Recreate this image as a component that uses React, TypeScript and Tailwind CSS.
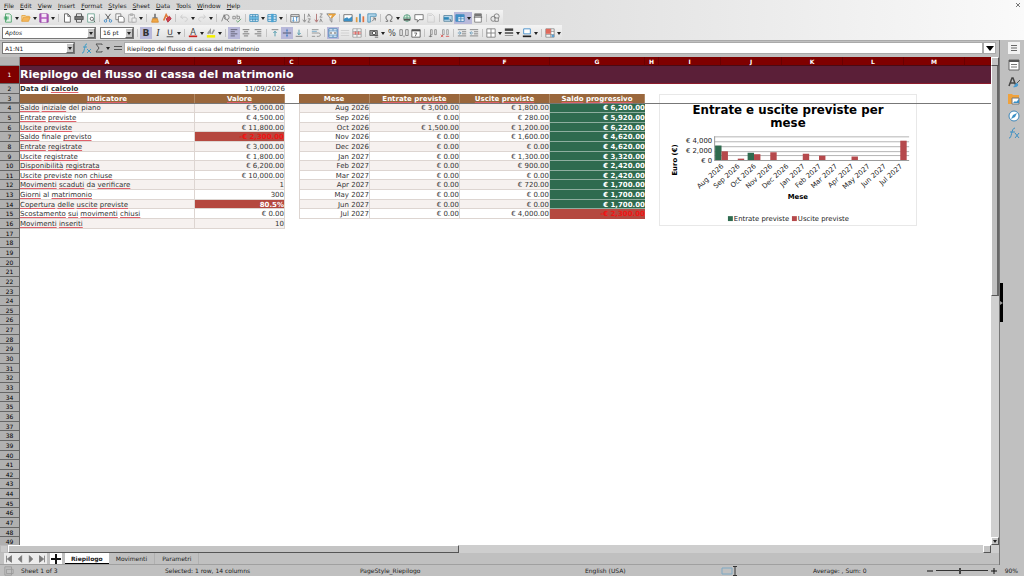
import { useState } from "react"
import type { ReactNode } from "react"

const COLS = "grid grid-rows-[minmax(0,1fr)] grid-cols-[20px_175px_90px_14px_71px_90px_90px_95px_14px_62px_61px_61px_61px_61px_minmax(0,1fr)]"

const menus = ["File", "Edit", "View", "Insert", "Format", "Styles", "Sheet", "Data", "Tools", "Window", "Help"]
const letters = ["A", "B", "C", "D", "E", "F", "G", "H", "I", "J", "K", "L", "M", ""]

// words the Italian labels share with the spell checker dictionary
const knownWords = ["del", "di", "Data", "piano", "finale", "non", "al", "da", "Mese"]

const indicators = [
    ["Saldo iniziale del piano", "€ 5,000.00"],
    ["Entrate previste", "€ 4,500.00"],
    ["Uscite previste", "€ 11,800.00"],
    ["Saldo finale previsto", "-€ 2,300.00"],
    ["Entrate registrate", "€ 3,000.00"],
    ["Uscite registrate", "€ 1,800.00"],
    ["Disponibilità registrata", "€ 6,200.00"],
    ["Uscite previste non chiuse", "€ 10,000.00"],
    ["Movimenti scaduti da verificare", "1"],
    ["Giorni al matrimonio", "300"],
    ["Copertura delle uscite previste", "80.5%"],
    ["Scostamento sui movimenti chiusi", "€ 0.00"],
    ["Movimenti inseriti", "10"],
]

const months = [
    { name: "Aug 2026", income: 3000, expense: 1800, balance: 6200 },
    { name: "Sep 2026", income: 0, expense: 280, balance: 5920 },
    { name: "Oct 2026", income: 1500, expense: 1200, balance: 6220 },
    { name: "Nov 2026", income: 0, expense: 1600, balance: 4620 },
    { name: "Dec 2026", income: 0, expense: 0, balance: 4620 },
    { name: "Jan 2027", income: 0, expense: 1300, balance: 3320 },
    { name: "Feb 2027", income: 0, expense: 900, balance: 2420 },
    { name: "Mar 2027", income: 0, expense: 0, balance: 2420 },
    { name: "Apr 2027", income: 0, expense: 720, balance: 1700 },
    { name: "May 2027", income: 0, expense: 0, balance: 1700 },
    { name: "Jun 2027", income: 0, expense: 0, balance: 1700 },
    { name: "Jul 2027", income: 0, expense: 4000, balance: -2300 },
]

function euro(n: number) {
    return `${n < 0 ? "-" : ""}€ ${Math.abs(n).toLocaleString("en-US", { minimumFractionDigits: 2 })}`
}

const icons: Record<string, ReactNode> = {
    new: <><path d="M3 1h5l2 2v8H3z" fill="#e8f5ec" stroke="#4a9f68" /><path d="M1 5h6M1 7h6M4 4v5" stroke="#2f9c5a" /></>,
    open: <><path d="M1 10V3h4l1 1h4v2" fill="#f7d9a0" stroke="#e5a13c" /><path d="M1 10l2-5h8l-2 5z" fill="#f5b75c" stroke="#e5a13c" /></>,
    save: <><path d="M1 1h9l1 1v9H1z" fill="#b45ac0" stroke="#8e3f9c" /><path d="M3 1h6v4H3zM3 7h6v4H3z" fill="#f3e6f5" stroke="none" /></>,
    pdf: <path d="M3 1h4l3 3v7H3zM7 1v3h3" fill="#fff" stroke="#555" />,
    print: <><path d="M3 4V1h6v3M3 8v3h6V8" fill="#fff" stroke="#444" /><path d="M1 4h10v4H1z" fill="#777" stroke="#444" /></>,
    preview: <><path d="M2 1h8v10H2z" fill="#fff" stroke="#69a08e" /><circle cx="7" cy="7" r="2" stroke="#555" /><path d="M9 9l2 2" stroke="#555" /></>,
    cut: <><path d="M3 1l5 7M9 1L4 8" stroke="#444" /><circle cx="3" cy="9.500" r="1.500" stroke="#3585c6" /><circle cx="9" cy="9.500" r="1.500" stroke="#3585c6" /></>,
    copy: <><path d="M1 1h6v7H1z" fill="#fff" stroke="#777" /><path d="M4 4h5l2 2v5H4z" fill="#fff" stroke="#666" /></>,
    paste: <><path d="M2 2h7v9H2zM4 1h3v2H4z" stroke="#aaa" /><path d="M6 6h5v5H6z" fill="#eee" stroke="#aaa" /></>,
    brush: <><path d="M6 1v4M3 6h6" stroke="#777" strokeWidth="2" /><path d="M3 7h6l1 4H2z" fill="#f0a848" stroke="#d88a2a" /></>,
    clear: <><path d="M2 9l3-7 3 5" stroke="#e07a3a" strokeWidth="2" /><path d="M5 7l4-3 2 3-4 4z" fill="#cf3f4f" stroke="#b03040" /></>,
    undo: <path d="M4 2L2 5l3 2M2 5h5c4 0 4 5 0 5" stroke="#c9c9c9" />,
    redo: <path d="M8 2l2 3-3 2M10 5H5c-4 0-4 5 0 5" stroke="#c9c9c9" />,
    find: <><path d="M2 10L5 2l2 5" stroke="#777" /><circle cx="8" cy="5" r="3" stroke="#777" /><path d="M8 8l3 3" stroke="#777" /></>,
    spell: <><path d="M1 7V4h3v3H1M6 2v5h3V4H6" stroke="#888" /><path d="M5 9l2 2 4-4" stroke="#5aa06a" /></>,
    table: <><path d="M1 2h10v8H1z" fill="#e9f4fb" stroke="#2e86b7" /><path d="M1 4.500h10M1 7.500h10M4.500 2v8M7.500 2v8" stroke="#2e86b7" /><path d="M1 5h10v2H1z" fill="#5fb2dd" stroke="none" /></>,
    columns: <><path d="M1 2h10v8H1z" fill="#e9f4fb" stroke="#2e86b7" /><path d="M1 4.500h10M1 7.500h10" stroke="#2e86b7" /><path d="M5 1h3v10H5z" fill="#4ba3d3" stroke="none" /></>,
    sort: <><path d="M1 2h10v9H1zM1 4h10" fill="#fff" stroke="#666" /><path d="M4 5v5M3 9l1 1 1-1M8 10V5M7 6l1-1 1 1" stroke="#3585c6" /></>,
    asc: <><path d="M3 1v9M1 8l2 3 2-3" stroke="#888" /><path d="M7 5l1-4 2 4M7 7h3l-3 4h3" stroke="#888" /></>,
    desc: <><path d="M3 1v9M1 8l2 3 2-3" stroke="#a66" /><path d="M7 1h3L7 5h3M7 11l1-4 2 4" stroke="#888" /></>,
    filter: <><path d="M1 1h10L7 6v5L5 9V6z" fill="#fff" stroke="#777" /><path d="M3 2h7L6 6" stroke="#e9a23b" strokeWidth="2" /></>,
    image: <><path d="M1 2h10v8H1z" fill="#fff" stroke="#666" /><path d="M1 10V7l4-2 2 2 4-3v6z" fill="#3b8fc4" stroke="none" /></>,
    chart: <><path d="M2 11V5" stroke="#e09a3e" strokeWidth="2" /><path d="M6 11V1" stroke="#3b8fc4" strokeWidth="2" /><path d="M10 11V4" stroke="#e0703e" strokeWidth="2" /></>,
    pivot: <><path d="M1 1h10v3H4v7H1z" fill="#b9dcf0" stroke="#4b8fb5" /><path d="M6 10l4-4M10 9V6H7" stroke="#666" /></>,
    omega: <path d="M2 10h2.500V9C1 7 2 2 6 2s5 5 1.500 7v1H10" stroke="#555" />,
    link: <><circle cx="6" cy="6" r="4" fill="#d6ecda" stroke="#559a80" /><path d="M2 6h8M6 2v8" stroke="#559a80" /><path d="M2 8h8" stroke="#555" strokeWidth="2" /></>,
    comment: <path d="M1 2h10v6H6l-2 3V8H1z" fill="#fff" stroke="#666" />,
    header: <path d="M2 1h5l3 3v7H2zM3 3h4" stroke="#ccc" />,
    print2: <><path d="M1 3h10v7H1z" fill="#b5d6ea" stroke="#5e87a0" /><path d="M1 5h6v3H1z" fill="#2e86b7" stroke="none" /><path d="M8 7l2 3" stroke="#555" /></>,
    freeze: <><path d="M1 2h10v8H1z" fill="#fff" stroke="#3d7eb4" /><path d="M1 2h10v3H1zM1 5h3v5H1z" fill="#3f8fc6" stroke="none" /><path d="M7 2v8M4 7h7" stroke="#3d7eb4" /></>,
    split: <><path d="M2 1h8v10H2z" fill="#fff" stroke="#777" /><path d="M2 1h8v3H2z" fill="#777" stroke="none" /><path d="M1 5h10" stroke="#555" /></>,
    shapes: <><circle cx="8" cy="4" r="3" stroke="#777" /><circle cx="4" cy="7" r="3" stroke="#777" /><path d="M6 6h4v4H6z" fill="#eee" stroke="#777" /></>,
    left: <path d="M2 2h8M2 4.500h5M2 7h8M2 9.500h5" stroke="#556" />,
    center: <path d="M2 2h8M3.500 4.500h5M2 7h8M3.500 9.500h5" stroke="#666" />,
    right: <path d="M2 2h8M5 4.500h5M2 7h8M5 9.500h5" stroke="#666" />,
    top: <><path d="M2 2h8" stroke="#777" /><path d="M6 10V4M4 6l2-2 2 2" stroke="#3b8fa4" /></>,
    middle: <><path d="M1 6h10" stroke="#445" /><path d="M6 1v10M5 3h2M5 9h2" stroke="#4b7fc4" /></>,
    bottom: <><path d="M2 10h8" stroke="#777" /><path d="M6 2v6M4 6l2 2 2-2" stroke="#3b8fa4" /></>,
    wrap: <><path d="M1 2h8M1 10h4M1 6h8c3 0 3 4 0 4H7" stroke="#888" /><path d="M1 4h6" stroke="#6aa6c8" /></>,
    merge: <><path d="M1 1h10v10H1zM1 3.500h10M1 8.500h10M6 1v2M6 9v2" fill="#fff" stroke="#3d7eb4" /><path d="M2 6h3M10 6H7" stroke="#333" /></>,
    mergeOff: <path d="M1 3h10M1 6h10M1 9h10" stroke="#ccc" />,
    unmerge: <><path d="M1 1h10v10H1zM1 4h10M1 8h10M6 1v10" fill="#fff" stroke="#999" /><path d="M1 6h10M4 4v4M8 4v4" stroke="#d8504c" /></>,
    currency: <><path d="M1 3h9v6H1z" fill="#999" stroke="#555" /><circle cx="6" cy="6" r="2" fill="#fff" stroke="#444" /><path d="M7 9h4M7 11h4" stroke="#555" /></>,
    number: <path d="M1 2h3v7H1zM8 2h3v7H8zM6 9v2" stroke="#777" />,
    date: <><path d="M1 2h10v9H1z" fill="#fff" stroke="#555" /><path d="M1 3h10" stroke="#555" strokeWidth="2" /><path d="M4 6h3L5 10" stroke="#555" /></>,
    addDec: <><path d="M3 2h2v6H3zM8 2h2v6H8z" stroke="#888" /><path d="M1 10h4M3 8v3" stroke="#777" /></>,
    delDec: <><path d="M3 2h2v6H3zM8 2h2v6H8z" stroke="#999" /><path d="M1 8l3 3M4 8l-3 3M7 10h4" stroke="#d8504c" /></>,
    indent: <><path d="M1 2h10M6 4.500h5M6 7h5M1 9.500h10" stroke="#777" /><path d="M1 6h3M3 4l2 2-2 2" stroke="#5c93b5" /></>,
    outdent: <><path d="M1 2h10M6 4.500h5M6 7h5M1 9.500h10" stroke="#777" /><path d="M2 6h3M3 4L1 6l2 2" stroke="#5c93b5" /></>,
    borders: <path d="M1 1h10v10H1zM6 1v10M1 6h10" fill="#fff" stroke="#777" />,
    style: <><path d="M1 2h10" stroke="#444" strokeWidth="3" /><path d="M1 6h10" stroke="#555" strokeWidth="2" /><path d="M1 9h10" stroke="#888" /></>,
    color: <><path d="M2 1h8v6H2z" fill="#fff" stroke="#3585c6" /><path d="M1 10h10" stroke="#222" strokeWidth="2" /></>,
    cond: <><path d="M1 1h10v10H1zM1 4h10M1 8h10M7 1v10" fill="#fff" stroke="#888" /><path d="M1 1h6v6H1z" fill="#df6a5c" stroke="none" /><path d="M8 8h3v3H8z" fill="#5b9fd0" stroke="none" /></>,
    bold: <text x="6" y="10" textAnchor="middle" fill="#333" fontSize="11" fontWeight="700">B</text>,
    italic: <text x="6" y="10" textAnchor="middle" fill="#333" fontSize="12" fontStyle="italic" fontFamily="Liberation Serif">I</text>,
    underline: <><text x="6" y="8" textAnchor="middle" fill="#333" fontSize="9">U</text><path d="M2 10.500h8" stroke="#333" /></>,
    fontColor: <><text x="6" y="8" textAnchor="middle" fill="#444" fontSize="10">A</text><path d="M1 10h10" stroke="#c9211e" strokeWidth="2" /></>,
    highlight: <><path d="M2 7l3-4v4M7 7l3-5" stroke="#999" strokeWidth="2" /><path d="M1 10h10" stroke="#f4f000" strokeWidth="3" /></>,
    percent: <text x="6" y="10" textAnchor="middle" fill="#444" fontSize="10">%</text>,
}

// "v" is a drop-down arrow, "|" a separator, "*" marks a pressed button
const standardBar = "new v open v save v | pdf print preview | cut copy paste v | brush clear | undo v redo v | find spell | table v columns v | sort asc desc filter | image chart pivot | omega v link comment header | print2 *freeze *v split | shapes"
const formatBar = "| *bold italic underline v | fontColor v highlight v | *left center right | top *middle bottom | wrap | *merge mergeOff unmerge | currency v percent number date | addDec delDec | indent outdent | borders v style v color v | cond v"

function Arrow() {
    return <svg className="h-1 w-1.5" viewBox="0 0 6 4"><path d="M1 1h4L3 4z" fill="#222" /></svg>
}

function Tools({ items }: { items: string }) {
    return (
        <div className="flex items-center">
            {items.split(" ").map((item, i) => {
                const pressed = item.startsWith("*")
                const name = item.replace("*", "")
                if (name === "|") {
                    return <span key={i} className="flex w-[5px] justify-center"><span className="h-2 w-px bg-[#c4c4c4]" /></span>
                }
                if (name === "v") {
                    return (
                        <button key={i} aria-label="More options" className={`flex h-3 w-1.5 items-center justify-center ${pressed ? "bg-[#b9b9da]" : ""}`}>
                            <Arrow />
                        </button>
                    )
                }
                return (
                    <button key={i} aria-label={name} className={`flex h-3 w-3 items-center justify-center ${pressed ? "bg-[#b9b9da]" : ""}`}>
                        <svg className="size-2.5" viewBox="0 0 12 12" fill="none">{icons[name]}</svg>
                    </button>
                )
            })}
        </div>
    )
}

function Combo({ label, value, className }: { label: string; value: string; className: string }) {
    return (
        <div className={`flex h-3 items-stretch border border-[#777] bg-white ${className}`}>
            <input aria-label={label} defaultValue={value} className="w-0 min-w-0 flex-1 px-0.5 outline-none" />
            <button aria-label={`${label} list`} className="flex w-2 items-center justify-center border border-t-white border-r-[#666] border-b-[#666] border-l-white bg-[#c6c6c6]"><Arrow /></button>
        </div>
    )
}

function Spelled({ text }: { text: string }) {
    return (
        <>
            {text.split(" ").map((word, i) => (
                <span key={i}>
                    {i > 0 && " "}
                    <span className={knownWords.includes(word) ? "" : "underline decoration-[#e0606a] decoration-1 underline-offset-1 [text-decoration-skip-ink:none]"}>{word}</span>
                </span>
            ))}
        </>
    )
}

function Chart() {
    return (
        <svg className="absolute top-[37px] left-[659px] h-[132px] w-[258px] border border-[#e8e8e8] bg-white" viewBox="0 0 258 132" fontSize="7" fill="#222">
            <text x="129" y="19" fontSize="12" fontWeight="700" fill="#000" textAnchor="middle">Entrate e uscite previste per</text>
            <text x="129" y="32" fontSize="12" fontWeight="700" fill="#000" textAnchor="middle">mese</text>
            {[42, 47, 52, 57, 61].map((y) => <path key={y} d={`M54 ${y}.500h198`} stroke="#b3b3b3" />)}
            <path d="M54.500 42v24M54 66.500h198" stroke="#999" />
            <text x="52" y="49" textAnchor="end">€ 4,000</text>
            <text x="52" y="59" textAnchor="end">€ 2,000</text>
            <text x="52" y="69" textAnchor="end">€ 0</text>
            {months.map((m, i) => {
                const x = 55 + i * 16.5
                const up = (m.income / 1000) * 4.9
                const down = (m.expense / 1000) * 4.9
                return (
                    <g key={m.name}>
                        <rect x={x} y={66 - up} width="6.500" height={up} fill="#2f6b4f" />
                        <rect x={x + 6.5} y={66 - down} width="6.500" height={down} fill="#b5494c" />
                        <text textAnchor="end" transform={`translate(${x + 9} 73) rotate(-42)`}>{m.name}</text>
                    </g>
                )
            })}
            <text transform="translate(16 66) rotate(-90)" textAnchor="middle" fontWeight="700" fill="#000">Euro (€)</text>
            <text x="139" y="106" textAnchor="middle" fontWeight="700" fill="#000">Mese</text>
            <path d="M68 123h5v5h-5z" fill="#2f6b4f" />
            <text x="74" y="128">Entrate previste</text>
            <path d="M133 123h5v5h-5z" fill="#b5494c" />
            <text x="139" y="128">Uscite previste</text>
        </svg>
    )
}

function SheetRow({ row }: { row: number }) {
    const head = "border-r border-b border-[#666] text-center text-[6px] font-normal leading-[10px]"
    if (row === 1) {
        return (
            <tr className={COLS}>
                <th scope="row" className={`${head} flex items-center justify-center bg-[#7f0000] text-white`}>1</th>
                <td className="col-[2/-1] flex items-center border-b border-[#8c1c2c] bg-[#5b1f38] text-[11px] font-bold text-white">
                    Riepilogo del flusso di cassa del matrimonio
                </td>
            </tr>
        )
    }
    const left = indicators[row - 4]
    const month = months[row - 4]
    const fill = row % 2 === 0 ? "bg-[#f6f1ef]" : "bg-white"
    const cell = "border-r border-b border-[#ddd5d1] leading-[11px]"
    const title = "border-r border-[#b08a66] bg-[#9a673c] text-center font-bold leading-[11px] text-white"
    const alert = row === 7 || row === 14
    return (
        <tr className={COLS}>
            <th scope="row" className={`${head} bg-[#b0b0b0] text-black`}>{row}</th>
            {row === 2 && (
                <>
                    <td className="leading-[11px] font-bold"><Spelled text="Data di calcolo" /></td>
                    <td className="text-right leading-[11px]">11/09/2026</td>
                </>
            )}
            {row === 3 && (
                <>
                    <th scope="col" className={title}><Spelled text="Indicatore" /></th>
                    <th scope="col" className={title}><Spelled text="Valore" /></th>
                    <th scope="col" className={`${title} col-start-5`}>Mese</th>
                    <th scope="col" className={title}><Spelled text="Entrate previste" /></th>
                    <th scope="col" className={title}><Spelled text="Uscite previste" /></th>
                    <th scope="col" className={title}><Spelled text="Saldo progressivo" /></th>
                </>
            )}
            {left && (
                <>
                    <td className={`${cell} ${fill}`}><Spelled text={left[0]} /></td>
                    <td className={`${cell} text-right ${alert ? "bg-[#b5483f] font-bold" : fill} ${row === 7 ? "text-[#f01414]" : row === 14 ? "text-white" : ""}`}>{left[1]}</td>
                </>
            )}
            {month && (
                <>
                    <td className={`${cell} col-start-5 border-l text-right ${fill}`}>{month.name}</td>
                    <td className={`${cell} text-right ${fill}`}>{euro(month.income)}</td>
                    <td className={`${cell} text-right ${fill}`}>{euro(month.expense)}</td>
                    <td className={`border-b text-right leading-[11px] font-bold ${month.balance < 0 ? "border-[#b5483f] bg-[#b5483f] text-[#f01414]" : "border-[#8fae9f] bg-[#2f6b4f] text-white"}`}>{euro(month.balance)}</td>
                </>
            )}
        </tr>
    )
}

function Sheet() {
    return (
        <div className="relative min-w-0 flex-1 overflow-hidden bg-white">
            <table className="block h-[calc(100%+2px)] text-[7px] whitespace-nowrap text-[#333]">
                <tbody className="grid h-full grid-rows-[9px_18px_repeat(48,minmax(0,1fr))]">
                    <tr className={`${COLS} bg-[#7f0000] text-[6px] leading-[9px] text-white`}>
                        <td className="border-r border-b border-[#888] bg-[#b4b4b4]" />
                        {letters.map((letter, i) => (
                            <th key={i} scope="col" className="border-r border-b border-r-[#6a0000] border-b-[#4a0a14]">{letter}</th>
                        ))}
                    </tr>
                    {Array.from({ length: 49 }, (_, i) => <SheetRow key={i} row={i + 1} />)}
                </tbody>
            </table>
            <Chart />
            <div className="absolute top-[46px] right-0 left-0 h-px bg-[#777]" />
        </div>
    )
}

function Sidebar() {
    return (
        <aside className="relative flex w-[25px] flex-col items-center gap-[5px] border-l border-[#777] pt-0.5 pl-1">
            <button aria-label="Sidebar settings" className="bg-[#f2f2f2]">
                <svg className="size-3" viewBox="0 0 12 12"><path d="M3 3.500h6M3 6h6M3 8.500h6" stroke="#666" /></svg>
            </button>
            <button aria-label="Properties">
                <svg className="size-3" viewBox="0 0 12 12"><path d="M1 1h10v10H1z" fill="#fff" stroke="#666" /><path d="M1 2h10" stroke="#555" strokeWidth="2" /><path d="M3 5.500h6M3 8h6" stroke="#777" /></svg>
            </button>
            <button aria-label="Styles">
                <svg className="size-3" viewBox="0 0 12 12" fill="none"><path d="M1 10l3-8h1l3 8M2 7h5" stroke="#444" strokeWidth="1.500" /><path d="M12 4L8 8" stroke="#555" /><path d="M9 7c-2 0-2 3-4 4 3 1 6-1 5-3z" fill="#4a9bd0" /></svg>
            </button>
            <button aria-label="Gallery">
                <svg className="size-3" viewBox="0 0 12 12"><path d="M0 1h4l1 1h6v9H0z" fill="#f0a23c" /><path d="M4 5h7v6H4z" fill="#fff" stroke="#777" /><path d="M5 10l2-2 1 1 3-3v4z" fill="#3b8fc4" /></svg>
            </button>
            <button aria-label="Navigator">
                <svg className="size-3" viewBox="0 0 12 12"><circle cx="6" cy="6" r="5" fill="#fff" stroke="#3e86b8" /><path d="M9 3L7 7 3 9l2-4z" fill="#3b8fc4" /></svg>
            </button>
            <button aria-label="Functions">
                <svg className="size-3" viewBox="0 0 12 12" fill="none"><path d="M1 11c3 1 2-10 6-10M2 5h5M7 6l4 5M11 6l-4 5" stroke="#3b8fc4" /></svg>
            </button>
            <button aria-label="Hide sidebar" className="absolute top-[243px] left-0 flex h-[39px] w-[3px] items-center bg-black">
                <svg className="h-1 w-[3px]" viewBox="0 0 3 4"><path d="M0 0l3 2-3 2z" fill="#999" /></svg>
            </button>
        </aside>
    )
}

const sheets = ["Riepilogo", "Movimenti", "Parametri"]

function SheetTabs() {
    const [active, setActive] = useState("Riepilogo")
    return (
        <div className="flex h-3 items-stretch border-b border-[#a0a0a0] pl-1">
            <div className="flex items-center gap-px bg-[#ececec]">
                {["M3 2v8M9 2L4 6l5 4z", "M8 2L4 6l4 4z", "M4 2l4 4-4 4z", "M9 2v8M3 2l5 4-5 4z"].map((d, i) => (
                    <button key={i} aria-label={["First sheet", "Previous sheet", "Next sheet", "Last sheet"][i]}>
                        <svg className="h-2.5 w-2.5" viewBox="0 0 12 12"><path d={d} fill="#777" stroke="#777" /></svg>
                    </button>
                ))}
            </div>
            <button aria-label="Add sheet" className="mx-[3px] flex w-3 items-center justify-center bg-white">
                <svg className="size-2.5" viewBox="0 0 10 10"><path d="M5 0v10M0 5h10" stroke="#111" strokeWidth="2" /></svg>
            </button>
            {sheets.map((name) => (
                <button
                    key={name}
                    onClick={() => setActive(name)}
                    className={name === active ? "border-b border-black bg-white px-1.5 font-bold" : "border-r border-[#b0b0b0] px-[7px]"}>
                    {name}
                </button>
            ))}
        </div>
    )
}

function StatusBar() {
    return (
        <footer className="grid h-[11px] grid-cols-[21px_144px_195px_225px_128px_100px_110px_minmax(0,1fr)] items-center">
            <svg className="ml-1 size-2.5" viewBox="0 0 12 12" fill="none"><path d="M1 1h8v10H1zM3 4h8v5H3z" stroke="#999" /></svg>
            <span>Sheet 1 of 3</span>
            <span>Selected: 1 row, 14 columns</span>
            <span>PageStyle_Riepilogo</span>
            <span>English (USA)</span>
            <span className="flex items-center gap-1 pl-2">
                <svg className="h-2 w-3" viewBox="0 0 12 8" fill="none"><path d="M1 1h10v6H1z" stroke="#7fa9c4" /></svg>
                <svg className="-ml-1 h-2.5 w-1" viewBox="0 0 4 10"><path d="M2 0v10M0 .500h4M0 9.500h4" stroke="#333" /></svg>
            </span>
            <span>Average: , Sum: 0</span>
            <span className="flex items-center justify-between pr-1.5 pl-1">
                <button aria-label="Zoom out">
                    <svg className="h-1.5 w-1.5" viewBox="0 0 6 6"><path d="M0 3h6" stroke="#111" /></svg>
                </button>
                <input aria-label="Zoom" type="range" defaultValue="45" className="h-1.5 w-[52px] appearance-none bg-[linear-gradient(#333,#333)] bg-[length:100%_1px] bg-center bg-no-repeat [&::-webkit-slider-thumb]:h-1.5 [&::-webkit-slider-thumb]:w-0.5 [&::-webkit-slider-thumb]:appearance-none [&::-webkit-slider-thumb]:bg-[#444]" />
                <button aria-label="Zoom in">
                    <svg className="h-1.5 w-1.5" viewBox="0 0 6 6"><path d="M0 3h6M3 0v6" stroke="#111" /></svg>
                </button>
                <span className="pl-1">90%</span>
            </span>
        </footer>
    )
}

const scrollButton = "border border-t-white border-l-white border-r-[#555] border-b-[#555] bg-[#c4c4c4]"

export default function App() {
    return (
        <div className="flex h-screen flex-col overflow-hidden bg-[#c0c0c0] font-['DejaVu_Sans',sans-serif] text-[6px] leading-[9px] text-[#222]">
            <header className="h-10 bg-linear-to-r from-[#d2d2d2] via-[#dedede] to-[#fafafa]">
                <nav className="flex h-2.5 items-center gap-1.5 pl-1">
                    {menus.map((menu) => <button key={menu}><span className="underline">{menu[0]}</span>{menu.slice(1)}</button>)}
                    <button aria-label="Close document" className="mr-[3px] ml-auto">
                        <svg className="size-1.5" viewBox="0 0 6 6"><path d="M1 1l4 4M5 1L1 5" stroke="#777" /></svg>
                    </button>
                </nav>
                <div className="flex h-[15px] w-fit items-center bg-linear-to-b from-[#f4f4f4] to-[#e0e0e0] pr-0.5 pl-0.5">
                    <Tools items={standardBar} />
                </div>
                <div className="flex h-[15px] w-fit items-center bg-linear-to-b from-[#f4f4f4] to-[#e0e0e0] pl-0.5">
                    <Combo label="Font name" value="Aptos" className="w-[94px] italic" />
                    <Combo label="Font size" value="16 pt" className="mr-px ml-1 w-[34px]" />
                    <Tools items={formatBar} />
                </div>
            </header>
            <div className="flex min-h-0 flex-1">
                <main className="flex min-w-0 flex-1 flex-col">
                    <div className="flex h-[17px] items-center border-t border-[#aaa] pr-[3px] pb-0.5 pl-0.5">
                        <Combo label="Name box" value="A1:N1" className="w-[73px]" />
                        <svg className="ml-1.5 size-3" viewBox="0 0 12 12" fill="none"><path d="M1 11c3 1 2-10 5-9M2 5h4M6 7l4 4M10 7l-4 4" stroke="#3f9bc6" /></svg>
                        <button aria-label="Select function" className="ml-0.5 flex items-center gap-0.5">
                            <svg className="h-2.5 w-2" viewBox="0 0 8 10" fill="none"><path d="M7 2V1H1l3 4-3 4h6V8" stroke="#555" /></svg>
                            <Arrow />
                        </button>
                        <button aria-label="Formula" className="ml-[3px]">
                            <svg className="size-2" viewBox="0 0 8 8"><path d="M0 2.500h8M0 5.500h8" stroke="#555" /></svg>
                        </button>
                        <input aria-label="Formula input" defaultValue="Riepilogo del flusso di cassa del matrimonio" className="ml-0.5 h-3 min-w-0 flex-1 border border-[#aaa] bg-white px-0.5 outline-none" />
                        <button aria-label="Expand formula bar" className="flex h-3 w-[13px] items-center justify-center border border-[#aaa] bg-white">
                            <svg className="h-1.5 w-2" viewBox="0 0 8 6"><path d="M0 1h8L4 6z" fill="#000" /></svg>
                        </button>
                    </div>
                    <div className="flex min-h-0 flex-1">
                        <Sheet />
                        <div className="flex w-2 flex-col justify-between bg-[#d0d0d0]">
                            <div className="flex h-[239px] flex-col">
                                <button aria-label="Scroll up" className={`${scrollButton} h-[9px]`} />
                                <div className="flex-1 border-r-2 border-b border-l border-r-[#666] border-b-[#555] border-l-white bg-[#c0c0c0]" />
                            </div>
                            <button aria-label="Scroll down" className={`${scrollButton} flex h-2 items-center justify-center`}><Arrow /></button>
                        </div>
                    </div>
                    <div className="flex h-2 items-stretch bg-[#cecece] pr-2">
                        <button aria-label="Scroll left" className="w-2 border border-[#bbb] bg-[#cacaca]" />
                        <div className={`${scrollButton} w-[451px]`} />
                        <button aria-label="Scroll right" className={`${scrollButton} ml-auto w-2`} />
                    </div>
                    <SheetTabs />
                </main>
                <Sidebar />
            </div>
            <StatusBar />
        </div>
    )
}
